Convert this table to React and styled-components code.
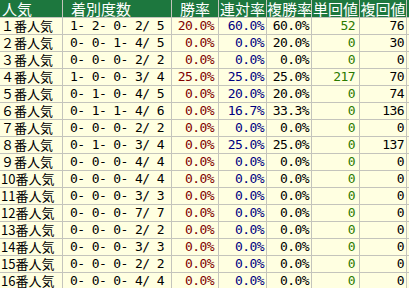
import React from "react";
import styled, { createGlobalStyle } from "styled-components";

const Global = createGlobalStyle`
  html, body { margin: 0; padding: 0; background: #ffffff; overflow: hidden; }
`;

const Grid = styled.div`
  display: grid;
  grid-template-columns: 62px 108px 46px 47px 44px 47px 46px 20px;
  grid-auto-rows: 16px;
  grid-template-rows: 17px;
  gap: 1px;
  background: #c4c4bc;
  width: max-content;
  font-family: "DejaVu Sans Mono", "Noto Sans CJK JP", monospace;
`;

const Head = styled.div`
  background: #1d773e;
  color: #ffffff;
  font-family: "Noto Sans CJK JP", sans-serif;
  font-size: 15px;
  line-height: 17px;
  white-space: nowrap;
  text-align: ${(p) => p.$align || "center"};
  padding-left: ${(p) => p.$pl || 0}px;
`;

const Cell = styled.div`
  background: #ffffe1;
  color: ${(p) => p.$color || "#000000"};
  font-size: 13px;
  letter-spacing: -0.6px;
  line-height: 16px;
  white-space: pre;
  text-align: ${(p) => p.$align || "right"};
  padding: 0 ${(p) => p.$pr ?? 3}px 0 ${(p) => p.$pl ?? 0}px;
`;

const Label = styled(Cell)`
  font-family: "Noto Sans CJK JP", sans-serif;
  font-size: 13px;
  letter-spacing: 0;
  text-align: left;
  padding-left: 1px;
`;

const data = [
  ["１番人気", "1- 2- 0- 2/ 5", "20.0%", "60.0%", "60.0%", "52", "76"],
  ["２番人気", "0- 0- 1- 4/ 5", "0.0%", "0.0%", "20.0%", "0", "30"],
  ["３番人気", "0- 0- 0- 2/ 2", "0.0%", "0.0%", "0.0%", "0", "0"],
  ["４番人気", "1- 0- 0- 3/ 4", "25.0%", "25.0%", "25.0%", "217", "70"],
  ["５番人気", "0- 1- 0- 4/ 5", "0.0%", "20.0%", "20.0%", "0", "74"],
  ["６番人気", "0- 1- 1- 4/ 6", "0.0%", "16.7%", "33.3%", "0", "136"],
  ["７番人気", "0- 0- 0- 2/ 2", "0.0%", "0.0%", "0.0%", "0", "0"],
  ["８番人気", "0- 1- 0- 3/ 4", "0.0%", "25.0%", "25.0%", "0", "137"],
  ["９番人気", "0- 0- 0- 4/ 4", "0.0%", "0.0%", "0.0%", "0", "0"],
  ["10番人気", "0- 0- 0- 4/ 4", "0.0%", "0.0%", "0.0%", "0", "0"],
  ["11番人気", "0- 0- 0- 3/ 3", "0.0%", "0.0%", "0.0%", "0", "0"],
  ["12番人気", "0- 0- 0- 7/ 7", "0.0%", "0.0%", "0.0%", "0", "0"],
  ["13番人気", "0- 0- 0- 2/ 2", "0.0%", "0.0%", "0.0%", "0", "0"],
  ["14番人気", "0- 0- 0- 3/ 3", "0.0%", "0.0%", "0.0%", "0", "0"],
  ["15番人気", "0- 0- 0- 2/ 2", "0.0%", "0.0%", "0.0%", "0", "0"],
  ["16番人気", "0- 0- 0- 4/ 4", "0.0%", "0.0%", "0.0%", "0", "0"],
];

export default function App() {
  return (
    <>
      <Global />
      <Grid>
        <Head $align="left" $pl={2}>人気</Head>
        <Head $align="left" $pl={8}>着別度数</Head>
        <Head>勝率</Head>
        <Head>連対率</Head>
        <Head>複勝率</Head>
        <Head>単回値</Head>
        <Head>複回値</Head>
        <Head />
        {data.map((r) => (
          <React.Fragment key={r[0]}>
            <Label>{r[0]}</Label>
            <Cell $align="left" $pl={7}>{r[1]}</Cell>
            <Cell $color="#800000" $pr={4}>{r[2]}</Cell>
            <Cell $color="#000080" $pr={2}>{r[3]}</Cell>
            <Cell $pr={2}>{r[4]}</Cell>
            <Cell $color="#2a7a00" $pr={4}>{r[5]}</Cell>
            <Cell $pr={2}>{r[6]}</Cell>
            <Cell />
          </React.Fragment>
        ))}
      </Grid>
    </>
  );
}
